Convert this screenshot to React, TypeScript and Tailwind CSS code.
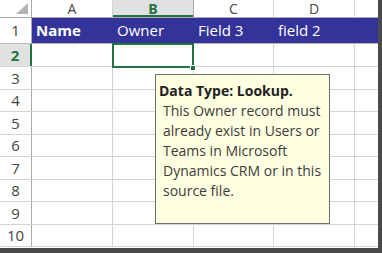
import React from 'react';

const cols = [
  { key: 'A', w: 'w-[81px]' },
  { key: 'B', w: 'w-[81px]' },
  { key: 'C', w: 'w-[80px]' },
  { key: 'D', w: 'w-[81px]' },
];

const rowHeights = ['h-[23px]', 'h-[22px]', 'h-[23px]', 'h-[22px]', 'h-[23px]', 'h-[22px]', 'h-[23px]', 'h-[22px]'];

const headers = [
  { text: 'Name', bold: true },
  { text: 'Owner', bold: false },
  { text: 'Field 3', bold: false },
  { text: 'field 2', bold: false },
];

export default function App() {
  return (
    <div className="w-[382px] h-[253px] overflow-hidden bg-white" style={{ fontFamily: '"Open Sans", "Noto Sans", sans-serif' }}>
      <div className="relative w-[382px] h-[253px] border-r-[4px] border-b-[5px] border-[#4a4a4a]">
        {/* column headers */}
        <div className="flex h-[18px] border-b border-[#ababab]">
          <div className="w-[32px] shrink-0 border-r border-[#ababab] relative">
            <svg className="absolute left-[16px] top-[3px]" width="12" height="11" viewBox="0 0 12 11">
              <polygon points="12,0 12,11 0,11" fill="#b4b4b4" />
            </svg>
          </div>
          {cols.map(c => (
            <div
              key={c.key}
              className={
                c.key === 'B'
                  ? `${c.w} shrink-0 flex items-center justify-center bg-[#e1e1e1] border-r border-[#ababab] shadow-[inset_0_-2px_0_#217346] text-[14px] leading-none font-bold text-[#217346]`
                  : `${c.w} shrink-0 flex items-center justify-center border-r border-[#d4d4d4] text-[14px] leading-none text-[#444]`
              }
            >
              {c.key}
            </div>
          ))}
          <div className="flex-1" />
        </div>

        {/* row 1 */}
        <div className="flex h-[26px] border-b border-[#b9b9b9]">
          <div className="w-[32px] shrink-0 border-r border-[#ababab] flex items-center justify-center text-[15px] text-[#444]">1</div>
          <div className="flex flex-1 bg-[#333399] items-center">
            {headers.map((h, i) => (
              <div
                key={h.text}
                className={`${cols[i].w} shrink-0 pl-[4px] text-[15px] text-white ${h.bold ? 'font-bold' : ''}`}
              >
                {h.text}
              </div>
            ))}
          </div>
        </div>

        {/* row 2 */}
        <div className="flex h-[23px] border-b border-[#d4d4d4]">
          <div className="w-[32px] shrink-0 bg-[#e1e1e1] border-r-2 border-[#217346] flex items-center justify-center text-[15px] font-bold text-[#217346]">2</div>
          {cols.map(c => (
            <div key={c.key} className={`${c.w} shrink-0 border-r border-[#d4d4d4]`} />
          ))}
        </div>

        {rowHeights.map((h, i) => (
          <div key={i} className={`flex ${h} border-b border-[#d4d4d4]`}>
            <div className="w-[32px] shrink-0 border-r border-[#ababab] flex items-center justify-center text-[15px] text-[#444]">{i + 3}</div>
            {cols.map(c => (
              <div key={c.key} className={`${c.w} shrink-0 border-r border-[#d4d4d4]`} />
            ))}
          </div>
        ))}

        {/* selection */}
        <div className="absolute left-[112px] top-[43px] w-[82px] h-[25px] border-2 border-[#217346]" />
        <div className="absolute left-[190px] top-[65px] w-[6px] h-[6px] bg-[#217346] border border-white" />

        {/* comment */}
        <div className="absolute left-[155px] top-[74px] w-[175px] h-[150px] bg-[#ffffe1] border border-[#6d6d6d] pl-[3px] pt-[6px] text-[14px] leading-[20px] text-[#3c3c3c]">
          <div className="font-bold text-[#222]">Data Type: Lookup.</div>
          <div className="pl-[4px]">
            This Owner record must<br />
            already exist in Users or<br />
            Teams in Microsoft<br />
            Dynamics CRM or in this<br />
            source file.
          </div>
        </div>
      </div>
    </div>
  );
}
